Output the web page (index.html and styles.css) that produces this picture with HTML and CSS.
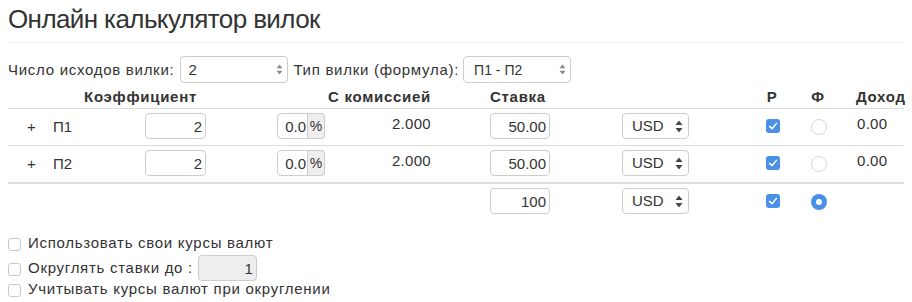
FILE: index.html
```html
<!DOCTYPE html>
<html lang="ru">
<head>
<meta charset="utf-8">
<title>Онлайн калькулятор вилок</title>
<link rel="stylesheet" href="styles.css">
</head>
<body>
<div class="page">
  <h1 class="title">Онлайн калькулятор вилок</h1>
  <div class="rule"></div>

  <div class="options">
    <span class="opt-label">Число исходов вилки:</span>
    <span class="select sel-count"><span class="sel-text">2</span><svg class="arr arr-light" viewBox="0 0 8 13"><path d="M4 0.5 L7.5 5 L0.5 5 Z"/><path d="M4 12.5 L7.5 8 L0.5 8 Z"/></svg></span>
    <span class="opt-label">Тип вилки (формула):</span>
    <span class="select sel-type"><span class="sel-text">П1 - П2</span><svg class="arr arr-light" viewBox="0 0 8 13"><path d="M4 0.5 L7.5 5 L0.5 5 Z"/><path d="M4 12.5 L7.5 8 L0.5 8 Z"/></svg></span>
  </div>

  <div class="calc">
    <div class="row head">
      <div class="h-coef">Коэффициент</div>
      <div class="h-comm">С комиссией</div>
      <div class="h-stake">Ставка</div>
      <div class="h-r">Р</div>
      <div class="h-f">Ф</div>
      <div class="h-inc">Доход</div>
    </div>

    <div class="row outcome">
      <div class="c-plus">+</div>
      <div class="c-name">П1</div>
      <div class="c-in"><input class="inp coef" value="2"></div>
      <div class="c-in"><span class="pct-group"><input class="inp pct" value="0.0"><span class="addon">%</span></span></div>
      <div class="c-comm">2.000</div>
      <div></div>
      <div class="c-in"><input class="inp stake" value="50.00"></div>
      <div class="c-in"><span class="select sel-cur"><span class="sel-text">USD</span><svg class="arr arr-dark" viewBox="0 0 8 13"><path d="M4 0.5 L7.5 5 L0.5 5 Z"/><path d="M4 12.5 L7.5 8 L0.5 8 Z"/></svg></span></div>
      <div class="c-mark"><span class="cb on"><svg viewBox="0 0 14 14"><polyline points="3.6,7.4 6,9.8 10.4,4.4"/></svg></span></div>
      <div class="c-mark"><span class="radio"></span></div>
      <div class="c-inc">0.00</div>
    </div>

    <div class="row outcome">
      <div class="c-plus">+</div>
      <div class="c-name">П2</div>
      <div class="c-in"><input class="inp coef" value="2"></div>
      <div class="c-in"><span class="pct-group"><input class="inp pct" value="0.0"><span class="addon">%</span></span></div>
      <div class="c-comm">2.000</div>
      <div></div>
      <div class="c-in"><input class="inp stake" value="50.00"></div>
      <div class="c-in"><span class="select sel-cur"><span class="sel-text">USD</span><svg class="arr arr-dark" viewBox="0 0 8 13"><path d="M4 0.5 L7.5 5 L0.5 5 Z"/><path d="M4 12.5 L7.5 8 L0.5 8 Z"/></svg></span></div>
      <div class="c-mark"><span class="cb on"><svg viewBox="0 0 14 14"><polyline points="3.6,7.4 6,9.8 10.4,4.4"/></svg></span></div>
      <div class="c-mark"><span class="radio"></span></div>
      <div class="c-inc">0.00</div>
    </div>

    <div class="row total">
      <div class="c-total"><input class="inp stake" value="100"></div>
      <div class="c-in"><span class="select sel-cur"><span class="sel-text">USD</span><svg class="arr arr-dark" viewBox="0 0 8 13"><path d="M4 0.5 L7.5 5 L0.5 5 Z"/><path d="M4 12.5 L7.5 8 L0.5 8 Z"/></svg></span></div>
      <div class="c-mark"><span class="cb on"><svg viewBox="0 0 14 14"><polyline points="3.6,7.4 6,9.8 10.4,4.4"/></svg></span></div>
      <div class="c-mark"><span class="radio checked"></span></div>
      <div></div>
    </div>
  </div>

  <div class="settings">
    <div class="set-line l1"><span class="box"></span><span class="set-text">Использовать свои курсы валют</span></div>
    <div class="set-line l2"><span class="box"></span><span class="set-text">Округлять ставки до :</span><input class="inp round" value="1" disabled></div>
    <div class="set-line l3"><span class="box"></span><span class="set-text">Учитывать курсы валют при округлении</span></div>
  </div>
</div>
</body>
</html>
```

FILE: styles.css
```css
html, body {
  margin: 0;
  padding: 0;
  background: #fff;
}
body {
  font-family: "Liberation Sans", Arial, sans-serif;
  font-size: 15px;
  line-height: 20px;
  color: #333;
}
.page {
  padding: 0 8px;
}
.title {
  margin: 4px 0 0;
  font-size: 26px;
  line-height: 30px;
  font-weight: 400;
  letter-spacing: -0.6px;
  color: #333;
}
.rule {
  margin-top: 8px;
  border-top: 1px solid #eee;
}
.options {
  margin-top: 13px;
  display: flex;
  align-items: center;
  height: 27px;
}
.opt-label {
  white-space: nowrap;
  letter-spacing: 0.72px;
}
.select {
  position: relative;
  display: inline-flex;
  align-items: center;
  box-sizing: border-box;
  height: 27px;
  border: 1px solid #ccc;
  border-radius: 4px;
  background: #fff;
  color: #333;
}
.sel-count {
  width: 108px;
  margin: 0 5px 0 6px;
  padding-left: 7px;
}
.sel-type {
  width: 108px;
  margin-left: 4px;
  padding-left: 10px;
  font-size: 14px;
}
.sel-cur {
  width: 67px;
  height: 26px;
  padding-left: 9px;
  font-size: 15px;
}
.arr {
  position: absolute;
  top: 50%;
}
.arr-light {
  right: 4px;
  width: 7px;
  height: 11px;
  margin-top: -5.5px;
  fill: #8a8a8a;
}
.arr-dark {
  right: 5px;
  width: 8px;
  height: 13px;
  margin-top: -6.5px;
  fill: #444;
}

.row {
  display: grid;
  grid-template-columns: 37px 92px 132px 64px 106px 43px 132px 136px 46px 44px 64px;
  align-items: start;
}
.head {
  font-weight: 700;
  letter-spacing: 0.72px;
  padding: 4px 0 0;
  box-sizing: border-box;
  height: 25px;
  white-space: nowrap;
}
.h-coef {
  grid-column: 2 / 4;
  padding-left: 39px;
}
.h-comm {
  grid-column: 4 / 6;
  text-align: right;
  padding-right: 8px;
}
.h-stake {
  grid-column: 7;
  padding-left: 8px;
}
.h-r {
  grid-column: 9;
  text-align: center;
  padding-right: 2px;
}
.h-f {
  grid-column: 10;
  text-align: center;
}
.h-inc {
  grid-column: 11;
  padding-left: 16px;
}
.outcome {
  border-top: 1px solid #ddd;
  height: 37px;
  box-sizing: border-box;
}
.total {
  border-top: 2px solid #ddd;
  height: 38px;
  box-sizing: border-box;
}
.c-plus {
  padding: 8px 0 0 19px;
}
.c-name {
  padding: 8px 0 0 8px;
}
.c-in {
  padding: 4px 0 0 8px;
}
.c-total {
  grid-column: 7;
  padding: 4px 0 0 8px;
}
.c-comm {
  padding: 5px 8px 0 0;
  text-align: right;
  letter-spacing: 0.3px;
}
.c-inc {
  padding: 5px 0 0 17px;
  letter-spacing: 0.3px;
}
.c-mark {
  padding-top: 10px;
  display: flex;
  justify-content: center;
}

.inp {
  box-sizing: border-box;
  height: 26px;
  border: 1px solid #ccc;
  border-radius: 4px;
  font-family: "Liberation Sans", Arial, sans-serif;
  font-size: 15px;
  color: #333;
  text-align: right;
  padding: 0 3px 0 4px;
  background: #fff;
  outline: none;
  margin: 0;
}
.coef {
  width: 61px;
}
.stake {
  width: 60px;
}
.pct-group {
  display: inline-flex;
  height: 26px;
}
.pct {
  width: 31px;
  border-radius: 4px 0 0 4px;
  padding: 0 1px 0 2px;
}
.addon {
  box-sizing: border-box;
  width: 17px;
  height: 26px;
  border: 1px solid #ccc;
  border-left: none;
  border-radius: 0 4px 4px 0;
  background: #eee;
  font-size: 14px;
  line-height: 24px;
  text-align: center;
  overflow: hidden;
}

.cb {
  display: inline-block;
  box-sizing: border-box;
  width: 14px;
  height: 14px;
  border-radius: 3px;
}
.cb.on {
  background: #4a8fe8;
}
.cb svg {
  display: block;
  width: 14px;
  height: 14px;
  fill: none;
  stroke: #fff;
  stroke-width: 1.5;
  stroke-linecap: round;
  stroke-linejoin: round;
}
.radio {
  display: inline-block;
  box-sizing: border-box;
  width: 16px;
  height: 16px;
  border-radius: 50%;
  border: 1px solid #d9d9d9;
  background: #fff;
  position: relative;
  left: 1px;
}
.radio.checked {
  border: none;
  background: #4a8fe8;
}
.radio.checked::after {
  content: "";
  position: absolute;
  left: 5px;
  top: 5px;
  width: 6px;
  height: 6px;
  border-radius: 50%;
  background: #fff;
}

.settings {
  margin-top: 13px;
}
.set-line {
  display: flex;
  align-items: center;
  white-space: nowrap;
}
.set-text {
  letter-spacing: 0.72px;
}
.l1 {
  height: 20px;
}
.l2 {
  margin-top: 2px;
  height: 26px;
}
.l3 {
  margin-top: -2px;
  height: 20px;
}
.box {
  box-sizing: border-box;
  width: 13px;
  height: 13px;
  border: 1px solid #c8c8c8;
  border-radius: 3px;
  background: #fff;
  margin: 3px 7px 0 0;
  flex: none;
}
.round {
  width: 59px;
  margin-left: 5px;
  background: #eee;
  color: #333;
  -webkit-text-fill-color: #333;
  opacity: 1;
}
```
